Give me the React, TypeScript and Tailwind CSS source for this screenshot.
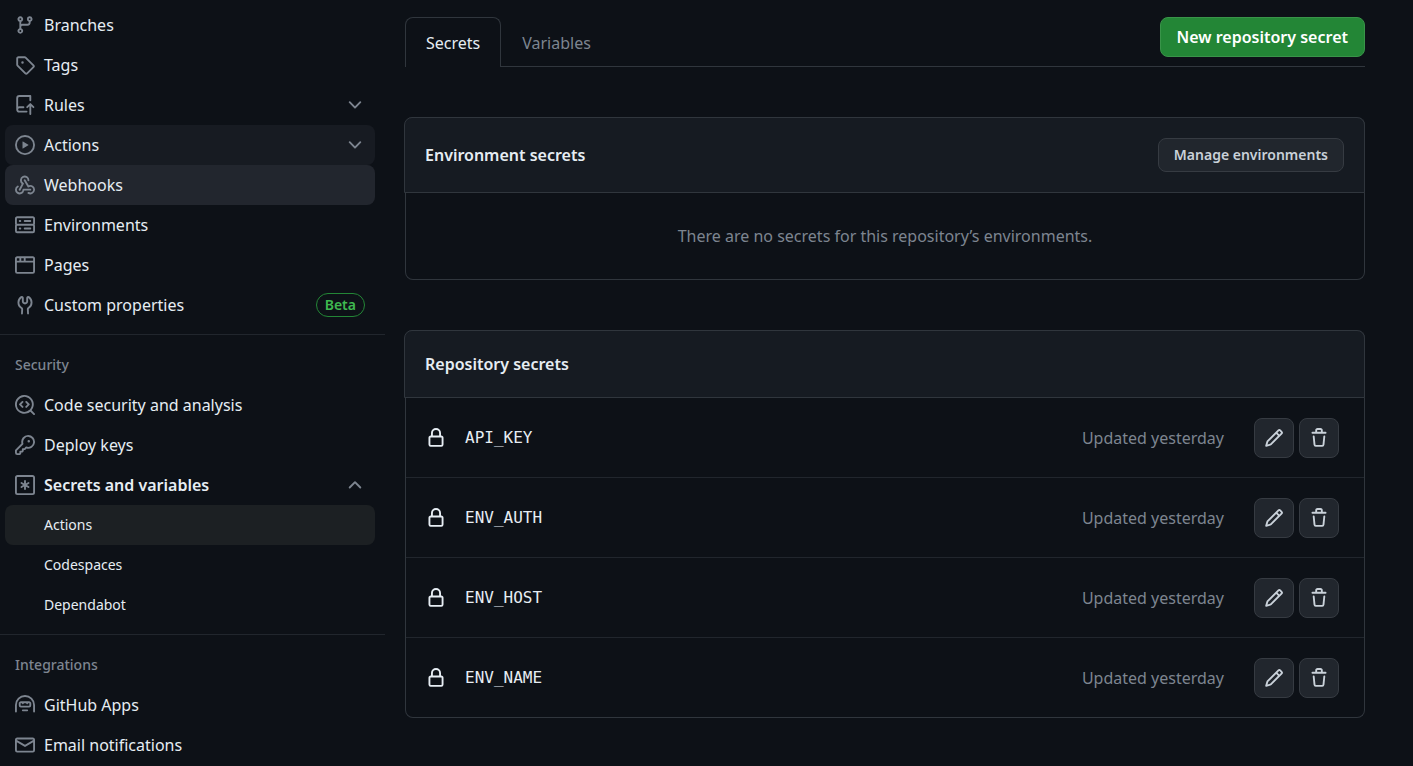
import React from 'react';

const ICONS = {
  branch:
    'M9.5 3.25a2.25 2.25 0 1 1 3 2.122V6A2.5 2.5 0 0 1 10 8.5H6a1 1 0 0 0-1 1v1.128a2.251 2.251 0 1 1-1.5 0V5.372a2.25 2.25 0 1 1 1.5 0v1.836A2.493 2.493 0 0 1 6 7h4a1 1 0 0 0 1-1v-.628A2.25 2.25 0 0 1 9.5 3.25Zm-6 0a.75.75 0 1 0 1.5 0 .75.75 0 0 0-1.5 0Zm8.25-.75a.75.75 0 1 0 0 1.5.75.75 0 0 0 0-1.5ZM4.25 12a.75.75 0 1 0 0 1.5.75.75 0 0 0 0-1.5Z',
  tag: 'M1 7.775V2.75C1 1.784 1.784 1 2.75 1h5.025c.464 0 .91.184 1.238.513l6.25 6.25a1.75 1.75 0 0 1 0 2.474l-5.026 5.026a1.75 1.75 0 0 1-2.474 0l-6.25-6.25A1.752 1.752 0 0 1 1 7.775Zm1.5 0c0 .066.026.13.073.177l6.25 6.25a.25.25 0 0 0 .354 0l5.025-5.025a.25.25 0 0 0 0-.354l-6.25-6.25a.25.25 0 0 0-.177-.073H2.75a.25.25 0 0 0-.25.25ZM6 5a1 1 0 1 1 0 2 1 1 0 0 1 0-2Z',
  repoPush:
    'M1 2.5A2.5 2.5 0 0 1 3.5 0h8.75a.75.75 0 0 1 .75.75v3.5a.75.75 0 0 1-1.5 0V1.5h-8a1 1 0 0 0-1 1v6.708A2.493 2.493 0 0 1 3.5 9h3.25a.75.75 0 0 1 0 1.5H3.5a1 1 0 0 0 0 2h5.75a.75.75 0 0 1 0 1.5H3.5A2.5 2.5 0 0 1 1 11.5Zm13.23 7.79h-.001l-1.224-1.224v6.184a.75.75 0 0 1-1.5 0V9.066L10.28 10.29a.75.75 0 0 1-1.06-1.061l2.505-2.504a.75.75 0 0 1 1.06 0L15.29 9.23a.751.751 0 0 1-.018 1.042.751.751 0 0 1-1.042.018Z',
  play: 'M8 0a8 8 0 1 1 0 16A8 8 0 0 1 8 0ZM1.5 8a6.5 6.5 0 1 0 13 0 6.5 6.5 0 0 0-13 0Zm4.879-2.773 4.264 2.559a.25.25 0 0 1 0 .428l-4.264 2.559A.25.25 0 0 1 6 10.559V5.442a.25.25 0 0 1 .379-.215Z',
  webhook:
    'M5.5 4.25a2.25 2.25 0 0 1 4.5 0 .75.75 0 0 0 1.5 0 3.75 3.75 0 1 0-6.14 2.889l-2.272 4.258a.75.75 0 0 0 1.324.706L7 7.25a.75.75 0 0 0-.309-1.015A2.25 2.25 0 0 1 5.5 4.25Z M7.364 3.607a.75.75 0 0 1 1.03.257l2.608 4.349a3.75 3.75 0 1 1-.628 6.785.75.75 0 0 1 .752-1.299 2.25 2.25 0 1 0-.033-3.88.75.75 0 0 1-1.03-.256L7.107 4.636a.75.75 0 0 1 .257-1.03Z M2.9 8.776A.75.75 0 0 1 2.625 9.8 2.25 2.25 0 1 0 6 11.75a.75.75 0 0 1 .75-.751h5.5a.75.75 0 0 1 0 1.5H7.425a3.751 3.751 0 1 1-5.55-3.998.75.75 0 0 1 1.024.274Z',
  server:
    'M1.75 1h12.5c.966 0 1.75.784 1.75 1.75v4c0 .372-.116.717-.314 1 .198.283.314.628.314 1v4a1.75 1.75 0 0 1-1.75 1.75H1.75A1.75 1.75 0 0 1 0 12.75v-4c0-.358.109-.707.314-1a1.739 1.739 0 0 1-.314-1v-4C0 1.784.784 1 1.75 1ZM1.5 2.75v4c0 .138.112.25.25.25h12.5a.25.25 0 0 0 .25-.25v-4a.25.25 0 0 0-.25-.25H1.75a.25.25 0 0 0-.25.25Zm.25 5.75a.25.25 0 0 0-.25.25v4c0 .138.112.25.25.25h12.5a.25.25 0 0 0 .25-.25v-4a.25.25 0 0 0-.25-.25ZM7 4.75A.75.75 0 0 1 7.75 4h4.5a.75.75 0 0 1 0 1.5h-4.5A.75.75 0 0 1 7 4.75ZM7.75 10h4.5a.75.75 0 0 1 0 1.5h-4.5a.75.75 0 0 1 0-1.5ZM3 4.75A.75.75 0 0 1 3.75 4h.5a.75.75 0 0 1 0 1.5h-.5A.75.75 0 0 1 3 4.75ZM3.75 10h.5a.75.75 0 0 1 0 1.5h-.5a.75.75 0 0 1 0-1.5Z',
  browser:
    'M0 2.75C0 1.784.784 1 1.75 1h12.5c.966 0 1.75.784 1.75 1.75v10.5A1.75 1.75 0 0 1 14.25 15H1.75A1.75 1.75 0 0 1 0 13.25ZM14.5 6h-13v7.25c0 .138.112.25.25.25h12.5a.25.25 0 0 0 .25-.25Zm-6-3.5v2h6V2.75a.25.25 0 0 0-.25-.25ZM5 2.5v2h2v-2Zm-3.25 0a.25.25 0 0 0-.25.25V4.5h2v-2Z',
  tools:
    'M5.433 2.304A4.492 4.492 0 0 0 3.5 6c0 1.598.832 3.002 2.09 3.802.518.328.929.923.902 1.64v.008l-.164 3.337a.75.75 0 1 1-1.498-.073l.163-3.33c.002-.085-.05-.216-.207-.316A5.996 5.996 0 0 1 2 6a5.993 5.993 0 0 1 2.567-4.92 1.482 1.482 0 0 1 1.673-.04c.462.296.76.827.76 1.423v2.82c0 .082.041.16.11.206l.75.51a.25.25 0 0 0 .28 0l.75-.51A.249.249 0 0 0 9 5.282V2.463c0-.596.298-1.127.76-1.423a1.482 1.482 0 0 1 1.673.04A5.993 5.993 0 0 1 14 6a5.996 5.996 0 0 1-2.786 5.068c-.157.1-.209.23-.207.315l.163 3.33a.752.752 0 0 1-1.094.714.75.75 0 0 1-.404-.64l-.164-3.345c-.027-.717.384-1.312.902-1.64A4.495 4.495 0 0 0 12.5 6a4.492 4.492 0 0 0-1.933-3.696c-.024.017-.067.067-.067.16v2.818a1.75 1.75 0 0 1-.767 1.448l-.75.51a1.75 1.75 0 0 1-1.966 0l-.75-.51A1.75 1.75 0 0 1 5.5 5.282V2.463c0-.092-.043-.142-.067-.159Z',
  codescan:
    'M8.47 4.97a.75.75 0 0 0 0 1.06L9.94 7.5 8.47 8.97a.75.75 0 1 0 1.06 1.06l2-2a.75.75 0 0 0 0-1.06l-2-2a.75.75 0 0 0-1.06 0ZM6.53 6.03a.75.75 0 0 0-1.06-1.06l-2 2a.75.75 0 0 0 0 1.06l2 2a.75.75 0 1 0 1.06-1.06L5.06 7.5l1.47-1.47Z M12.246 13.307a7.501 7.501 0 1 1 1.06-1.06l2.474 2.473a.749.749 0 1 1-1.06 1.06l-2.474-2.473ZM1.5 7.5a6.002 6.002 0 0 0 3.608 5.504 6.002 6.002 0 0 0 6.486-1.117.748.748 0 0 1 .292-.293A6 6 0 1 0 1.5 7.5Z',
  key: 'M10.5 0a5.499 5.499 0 1 1-1.288 10.848l-.932.932a.749.749 0 0 1-.53.22H7v.75a.749.749 0 0 1-.22.53l-.5.5a.749.749 0 0 1-.53.22H5v.75a.749.749 0 0 1-.22.53l-.5.5a.749.749 0 0 1-.53.22h-2A1.75 1.75 0 0 1 0 14.25v-2c0-.199.079-.389.22-.53l4.932-4.932A5.5 5.5 0 0 1 10.5 0Zm-4 5.5c-.001.431.069.86.205 1.269a.75.75 0 0 1-.181.768L1.5 12.56v1.69c0 .138.112.25.25.25h1.69l.06-.06v-1.19a.75.75 0 0 1 .75-.75h1.19l.06-.06v-1.19a.75.75 0 0 1 .75-.75h1.19l1.023-1.025a.75.75 0 0 1 .768-.18A4 4 0 1 0 6.5 5.5ZM11 6a1 1 0 1 1 0-2 1 1 0 0 1 0 2Z',
  asterisk:
    'M0 2C0 .9.9 0 2 0h12c1.1 0 2 .9 2 2v12a2 2 0 0 1-2 2H2a2 2 0 0 1-2-2Zm2-.5a.5.5 0 0 0-.5.5v12a.5.5 0 0 0 .5.5h12a.5.5 0 0 0 .5-.5V2a.5.5 0 0 0-.5-.5ZM8 4a.75.75 0 0 1 .75.75V6.7l1.69-.975a.75.75 0 0 1 .75 1.3L9.5 8l1.69.976a.75.75 0 0 1-.75 1.298L8.75 9.3v1.951a.75.75 0 0 1-1.5 0V9.299l-1.69.976a.75.75 0 0 1-.75-1.3L6.5 8l-1.69-.975a.75.75 0 0 1 .75-1.3l1.69.976V4.75A.75.75 0 0 1 8 4Z',
  hubot:
    'M0 8a8 8 0 1 1 16 0v5.25a.75.75 0 0 1-1.5 0V8a6.5 6.5 0 1 0-13 0v5.25a.75.75 0 0 1-1.5 0V8Zm5.5 4.25a.75.75 0 0 1 .75-.75h3.5a.75.75 0 0 1 0 1.5h-3.5a.75.75 0 0 1-.75-.75ZM3 6.75C3 5.784 3.784 5 4.75 5h6.5c.966 0 1.75.784 1.75 1.75v1.5A1.75 1.75 0 0 1 11.25 10h-6.5A1.75 1.75 0 0 1 3 8.25ZM4.5 6.5h.9l.9 1 .9-1h1.6l.9 1 .9-1h.9v1.75a.25.25 0 0 1-.25.25h-6.5a.25.25 0 0 1-.25-.25Z',
  mail: 'M1.75 2h12.5c.966 0 1.75.784 1.75 1.75v8.5A1.75 1.75 0 0 1 14.25 14H1.75A1.75 1.75 0 0 1 0 12.25v-8.5C0 2.784.784 2 1.75 2ZM1.5 12.251c0 .138.112.25.25.25h12.5a.25.25 0 0 0 .25-.25V5.809L8.38 9.397a.75.75 0 0 1-.76 0L1.5 5.809v6.442Zm13-8.181v-.32a.25.25 0 0 0-.25-.25H1.75a.25.25 0 0 0-.25.25v.32L8 7.88Z',
  lock: 'M4 4a4 4 0 0 1 8 0v2h.25c.966 0 1.75.784 1.75 1.75v5.5A1.75 1.75 0 0 1 12.25 15h-8.5A1.75 1.75 0 0 1 2 13.25v-5.5C2 6.784 2.784 6 3.75 6H4Zm8.25 3.5h-8.5a.25.25 0 0 0-.25.25v5.5c0 .138.112.25.25.25h8.5a.25.25 0 0 0 .25-.25v-5.5a.25.25 0 0 0-.25-.25ZM10.5 6V4a2.5 2.5 0 1 0-5 0v2Z',
  pencil:
    'M11.013 1.427a1.75 1.75 0 0 1 2.474 0l1.086 1.086a1.75 1.75 0 0 1 0 2.474l-8.61 8.61c-.21.21-.47.364-.756.445l-3.251.93a.75.75 0 0 1-.927-.928l.929-3.25c.081-.286.235-.547.445-.758l8.61-8.61Zm.176 4.823L9.75 4.81l-6.286 6.287a.253.253 0 0 0-.064.108l-.558 1.953 1.953-.558a.253.253 0 0 0 .108-.064Zm1.238-3.763a.25.25 0 0 0-.354 0L10.811 3.75l1.439 1.44 1.263-1.263a.25.25 0 0 0 0-.354Z',
  trash:
    'M11 1.75V3h2.25a.75.75 0 0 1 0 1.5H2.75a.75.75 0 0 1 0-1.5H5V1.75C5 .784 5.784 0 6.75 0h2.5C10.216 0 11 .784 11 1.75ZM4.496 6.675l.66 6.6a.25.25 0 0 0 .249.225h5.19a.25.25 0 0 0 .249-.225l.66-6.6a.75.75 0 0 1 1.492.149l-.66 6.6A1.748 1.748 0 0 1 10.595 15h-5.19a1.75 1.75 0 0 1-1.741-1.575l-.66-6.6a.75.75 0 1 1 1.492-.15ZM6.5 1.75V3h3V1.75a.25.25 0 0 0-.25-.25h-2.5a.25.25 0 0 0-.25.25Z',
  chevronDown:
    'M12.78 5.22a.749.749 0 0 1 0 1.06l-4.25 4.25a.749.749 0 0 1-1.06 0L3.22 6.28a.749.749 0 1 1 1.06-1.06L8 8.939l3.72-3.719a.749.749 0 0 1 1.06 0Z',
  chevronUp:
    'M3.22 10.53a.749.749 0 0 1 0-1.06l4.25-4.25a.749.749 0 0 1 1.06 0l4.25 4.25a.749.749 0 1 1-1.06 1.06L8 6.811 4.28 10.53a.749.749 0 0 1-1.06 0Z',
};

type IconName = keyof typeof ICONS;

function Icon({ name, className = '' }: { name: IconName; className?: string }) {
  return (
    <svg
      viewBox="0 0 16 16"
      fill="currentColor"
      aria-hidden="true"
      className={`size-5 shrink-0 ${className}`}
    >
      <path fillRule={name === 'hubot' ? 'evenodd' : 'nonzero'} d={ICONS[name]} />
    </svg>
  );
}

type NavItem = {
  label: string;
  icon: IconName;
  state?: 'muted' | 'hover';
  chevron?: 'chevronDown' | 'chevronUp';
  badge?: string;
  bold?: boolean;
  children?: { label: string; current?: boolean }[];
};

const GENERAL: NavItem[] = [
  { label: 'Branches', icon: 'branch' },
  { label: 'Tags', icon: 'tag' },
  { label: 'Rules', icon: 'repoPush', chevron: 'chevronDown' },
  { label: 'Actions', icon: 'play', chevron: 'chevronDown', state: 'muted' },
  { label: 'Webhooks', icon: 'webhook', state: 'hover' },
  { label: 'Environments', icon: 'server' },
  { label: 'Pages', icon: 'browser' },
  { label: 'Custom properties', icon: 'tools', badge: 'Beta' },
];

const SECURITY: NavItem[] = [
  { label: 'Code security and analysis', icon: 'codescan' },
  { label: 'Deploy keys', icon: 'key' },
  {
    label: 'Secrets and variables',
    icon: 'asterisk',
    chevron: 'chevronUp',
    bold: true,
    children: [
      { label: 'Actions', current: true },
      { label: 'Codespaces' },
      { label: 'Dependabot' },
    ],
  },
];

const INTEGRATIONS: NavItem[] = [
  { label: 'GitHub Apps', icon: 'hubot' },
  { label: 'Email notifications', icon: 'mail' },
];

const SECRETS = ['API_KEY', 'ENV_AUTH', 'ENV_HOST', 'ENV_NAME'];

const STATE_CLASS = { muted: 'bg-[#171b22]', hover: 'bg-[#22262e]' };

function NavRow({ item }: { item: NavItem }) {
  const row = `flex h-10 w-full items-center gap-[9px] rounded-lg px-2.5 text-left ${
    item.state ? STATE_CLASS[item.state] : ''
  }`;
  const content = (
    <>
      <Icon name={item.icon} className="text-[#7d8590]" />
      <span className={`grow ${item.bold ? 'font-semibold' : ''}`}>{item.label}</span>
      {item.badge && (
        <span className="rounded-full border border-[#238636] px-2 text-sm leading-[22px] font-semibold text-[#3fb950]">
          {item.badge}
        </span>
      )}
      {item.chevron && <Icon name={item.chevron} className="text-[#7d8590]" />}
    </>
  );
  return (
    <li>
      {item.chevron ? (
        <button type="button" aria-expanded={item.chevron === 'chevronUp'} className={row}>
          {content}
        </button>
      ) : (
        <a href="#" className={row}>
          {content}
        </a>
      )}
      {item.children && (
        <ul>
          {item.children.map((child) => (
            <li key={child.label}>
              <a
                href="#"
                aria-current={child.current ? 'page' : undefined}
                className={`flex h-10 items-center rounded-lg pl-[39px] text-sm ${
                  child.current ? 'bg-[#1c2023]' : ''
                }`}
              >
                {child.label}
              </a>
            </li>
          ))}
        </ul>
      )}
    </li>
  );
}

function NavSection({ title, items }: { title?: string; items: NavItem[] }) {
  return (
    <section>
      {title && (
        <>
          <hr className="mt-[9px] mb-2.5 border-[#21262d]" />
          <h3 className="flex h-10 items-center px-[15px] text-sm font-medium text-[#7d8590]">
            {title}
          </h3>
        </>
      )}
      <ul className="pr-2.5 pl-[5px]">
        {items.map((item) => (
          <NavRow key={item.label} item={item} />
        ))}
      </ul>
    </section>
  );
}

function PanelHeader({ children }: { children: React.ReactNode }) {
  return (
    <div className="-mt-px -mr-px -ml-0.5 flex items-center justify-between rounded-t-lg border border-[#30363d] bg-[#161b22] p-5">
      {children}
    </div>
  );
}

function IconButton({ icon, label }: { icon: IconName; label: string }) {
  return (
    <button
      type="button"
      aria-label={label}
      className="flex size-10 items-center justify-center rounded-lg border border-[#363b42] bg-[#21262d] text-[#c9d1d9]"
    >
      <Icon name={icon} />
    </button>
  );
}

export default function App() {
  return (
    <div className="flex min-h-screen items-start bg-[#0d1117] font-['Noto_Sans','Open_Sans',sans-serif] text-base text-[#e6edf3]">
      <nav aria-label="Repository settings" className="w-[385px] shrink-0 pt-[5px]">
        <NavSection items={GENERAL} />
        <NavSection title="Security" items={SECURITY} />
        <NavSection title="Integrations" items={INTEGRATIONS} />
      </nav>

      <main className="min-w-0 grow pt-[17px] pr-12 pl-5">
        <div className="flex h-[50px] items-start justify-between border-b border-[#30363d]">
          <div role="tablist" className="flex">
            <button
              type="button"
              role="tab"
              aria-selected="true"
              className="h-[50px] rounded-t-lg border border-b-0 border-[#30363d] bg-[#0d1117] px-5"
            >
              Secrets
            </button>
            <button
              type="button"
              role="tab"
              aria-selected="false"
              className="h-[50px] border border-b-0 border-transparent px-5 text-[#7d8590]"
            >
              Variables
            </button>
          </div>
          <button
            type="button"
            className="h-10 rounded-lg border border-[#399449] bg-[#238636] px-4 font-semibold text-white"
          >
            New repository secret
          </button>
        </div>

        <section className="mt-[51px] rounded-lg border border-t-0 border-[#30363d]">
          <PanelHeader>
            <h2 className="font-semibold">Environment secrets</h2>
            <button
              type="button"
              className="h-[34px] rounded-lg border border-[#363b42] bg-[#21262d] px-[15px] text-sm font-semibold text-[#c9d1d9]"
            >
              Manage environments
            </button>
          </PanelHeader>
          <p className="flex h-[86px] items-center justify-center text-[#7d8590]">
            There are no secrets for this repository’s environments.
          </p>
        </section>

        <section className="mt-[51px] rounded-lg border border-t-0 border-[#30363d]">
          <PanelHeader>
            <h2 className="leading-[26px] font-semibold">Repository secrets</h2>
          </PanelHeader>
          <table
            aria-label="Repository secrets"
            className="w-full border-separate border-spacing-0"
          >
            <tbody>
              {SECRETS.map((name) => (
                <tr
                  key={name}
                  className="h-20 *:border-b *:border-[#21262d] last:h-[79px] last:*:border-b-0"
                >
                  <td className="w-[59px] pl-5">
                    <Icon name="lock" />
                  </td>
                  <td className="font-['DejaVu_Sans_Mono','Liberation_Mono',monospace]">{name}</td>
                  <td className="pr-[30px] text-right text-[#7d8590]">Updated yesterday</td>
                  <td className="w-[110px] pr-[25px]">
                    <div className="flex gap-[5px]">
                      <IconButton icon="pencil" label={`Edit ${name}`} />
                      <IconButton icon="trash" label={`Delete ${name}`} />
                    </div>
                  </td>
                </tr>
              ))}
            </tbody>
          </table>
        </section>
      </main>
    </div>
  );
}
